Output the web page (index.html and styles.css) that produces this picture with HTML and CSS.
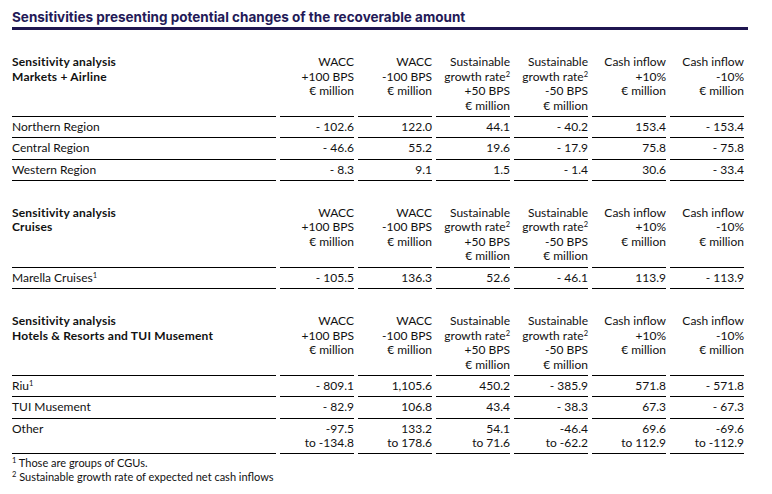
FILE: index.html
```html
<!DOCTYPE html>
<html>
<head>
<meta charset="utf-8">
<link rel="stylesheet" href="styles.css">
</head>
<body>
<div class="page">
  <h1 class="title">Sensitivities presenting potential changes of the recoverable amount</h1>

  <div class="sec">
    <div class="hd lbl">Sensitivity analysis<br>Markets + Airline</div>
    <div class="hd">WACC<br>+100 BPS<br>€ million</div>
    <div class="hd">WACC<br>-100 BPS<br>€ million</div>
    <div class="hd">Sustainable<br>growth rate<sup>2</sup><br>+50 BPS<br>€ million</div>
    <div class="hd">Sustainable<br>growth rate<sup>2</sup><br>-50 BPS<br>€ million</div>
    <div class="hd">Cash inflow<br>+10%<br>€ million</div>
    <div class="hd">Cash inflow<br>-10%<br>€ million</div>

    <div class="c name">Northern Region</div>
    <div class="c">- 102.6</div><div class="c">122.0</div><div class="c">44.1</div><div class="c">- 40.2</div><div class="c">153.4</div><div class="c">- 153.4</div>
    <div class="c name">Central Region</div>
    <div class="c">- 46.6</div><div class="c">55.2</div><div class="c">19.6</div><div class="c">- 17.9</div><div class="c">75.8</div><div class="c">- 75.8</div>
    <div class="c name">Western Region</div>
    <div class="c">- 8.3</div><div class="c">9.1</div><div class="c">1.5</div><div class="c">- 1.4</div><div class="c">30.6</div><div class="c">- 33.4</div>
  </div>

  <div class="sec">
    <div class="hd lbl">Sensitivity analysis<br>Cruises</div>
    <div class="hd">WACC<br>+100 BPS<br>€ million</div>
    <div class="hd">WACC<br>-100 BPS<br>€ million</div>
    <div class="hd">Sustainable<br>growth rate<sup>2</sup><br>+50 BPS<br>€ million</div>
    <div class="hd">Sustainable<br>growth rate<sup>2</sup><br>-50 BPS<br>€ million</div>
    <div class="hd">Cash inflow<br>+10%<br>€ million</div>
    <div class="hd">Cash inflow<br>-10%<br>€ million</div>

    <div class="c name">Marella Cruises<sup>1</sup></div>
    <div class="c">- 105.5</div><div class="c">136.3</div><div class="c">52.6</div><div class="c">- 46.1</div><div class="c">113.9</div><div class="c">- 113.9</div>
  </div>

  <div class="sec">
    <div class="hd lbl">Sensitivity analysis<br>Hotels &amp; Resorts and TUI Musement</div>
    <div class="hd">WACC<br>+100 BPS<br>€ million</div>
    <div class="hd">WACC<br>-100 BPS<br>€ million</div>
    <div class="hd">Sustainable<br>growth rate<sup>2</sup><br>+50 BPS<br>€ million</div>
    <div class="hd">Sustainable<br>growth rate<sup>2</sup><br>-50 BPS<br>€ million</div>
    <div class="hd">Cash inflow<br>+10%<br>€ million</div>
    <div class="hd">Cash inflow<br>-10%<br>€ million</div>

    <div class="c name">Riu<sup>1</sup></div>
    <div class="c">- 809.1</div><div class="c">1,105.6</div><div class="c">450.2</div><div class="c">- 385.9</div><div class="c">571.8</div><div class="c">- 571.8</div>
    <div class="c name">TUI Musement</div>
    <div class="c">- 82.9</div><div class="c">106.8</div><div class="c">43.4</div><div class="c">- 38.3</div><div class="c">67.3</div><div class="c">- 67.3</div>
    <div class="c name">Other</div>
    <div class="c">-97.5<br>to -134.8</div><div class="c">133.2<br>to 178.6</div><div class="c">54.1<br>to 71.6</div><div class="c">-46.4<br>to -62.2</div><div class="c">69.6<br>to 112.9</div><div class="c">-69.6<br>to -112.9</div>
  </div>

  <div class="notes">
    <p><sup>1</sup> Those are groups of CGUs.</p>
    <p><sup>2</sup> Sustainable growth rate of expected net cash inflows</p>
  </div>
</div>
</body>
</html>
```

FILE: styles.css
```css
* { box-sizing: border-box; }
body {
  margin: 0;
  background: #fff;
  color: #111;
  font-family: Lato, "Open Sans", sans-serif;
  font-size: 12px;
}
.page {
  padding: 8px 24px 0 12px;
}
.title {
  margin: 0;
  font-family: Inter, "DejaVu Sans", sans-serif;
  font-weight: 700;
  font-size: 13.5px;
  line-height: 19px;
  color: #231a57;
  border-bottom: 3px solid #1f1650;
  width: 736px;
}
.sec {
  display: grid;
  grid-template-columns: 264px repeat(6, 74.5px);
  column-gap: 3.5px;
  margin-top: 25px;
}
.hd {
  text-align: right;
  line-height: 14.5px;
  padding-bottom: 3px;
  border-bottom: 1px solid #000;
}
.hd.lbl {
  text-align: left;
  font-weight: 700;
  letter-spacing: 0.2px;
}
.c {
  text-align: right;
  line-height: 14.3px;
  padding: 3px 0;
  border-bottom: 1px solid #000;
}
.c.name { text-align: left; }
sup {
  font-size: 7.5px;
  line-height: 0;
  vertical-align: 4px;
}
.notes {
  padding-top: 2px;
  font-size: 11px;
}
.notes p {
  margin: 0;
  line-height: 14px;
}
```
